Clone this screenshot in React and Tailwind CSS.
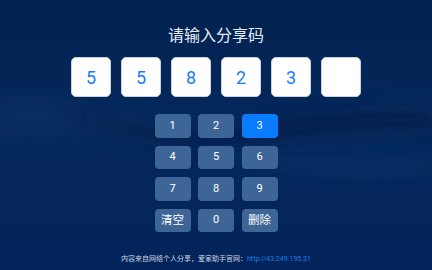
import React from "react";

const font = { fontFamily: "Roboto, 'Noto Sans CJK SC', sans-serif" };

export default function App() {
  const code = ["5", "5", "8", "2", "3", ""];
  const keys = ["1", "2", "3", "4", "5", "6", "7", "8", "9", "清空", "0", "删除"];
  return (
    <div
      className="relative w-[432px] h-[270px] overflow-hidden bg-[#03265a]"
      style={font}
    >
      <svg
        className="absolute inset-0"
        width="432"
        height="270"
        viewBox="0 0 432 270"
      >
        <defs>
          <linearGradient id="bg" x1="0" y1="0" x2="0" y2="1">
            <stop offset="0" stopColor="#022250" />
            <stop offset="0.45" stopColor="#05285b" />
            <stop offset="1" stopColor="#03245a" />
          </linearGradient>
          <filter id="blur" x="-20%" y="-50%" width="140%" height="200%">
            <feGaussianBlur stdDeviation="8" />
          </filter>
        </defs>
        <rect width="432" height="270" fill="url(#bg)" />
        <path
          d="M0 95 C60 90 120 110 180 120 C260 130 330 110 432 95 L432 135 C340 150 260 160 180 150 C110 140 50 130 0 140 Z"
          fill="#0b3669"
          opacity="0.4"
          filter="url(#blur)"
        />
        <path
          d="M60 110 C120 120 170 135 220 130 C280 120 330 108 432 112 L432 130 C340 128 290 140 230 145 C170 150 120 135 60 110 Z"
          fill="#011741"
          opacity="0.6"
          filter="url(#blur)"
        />
        <path
          d="M200 150 C280 155 350 160 432 150 L432 175 C340 185 270 175 200 150 Z"
          fill="#0c386d"
          opacity="0.35"
          filter="url(#blur)"
        />
      </svg>

      <div className="relative flex flex-col items-center">
        <div className="mt-[26px] text-[16px] leading-[20px] text-[#e4ebf4]">
          请输入分享码
        </div>

        <div className="mt-[11px] flex gap-[10px]">
          {code.map((c, i) => (
            <div
              key={i}
              className="flex h-[40px] w-[40px] items-center justify-center rounded-[5px] border border-[#c9d2de] bg-white text-[18px] text-[#1a7bff]"
            >
              {c}
            </div>
          ))}
        </div>

        <div className="mt-[17px] grid grid-cols-[36px_36px_36px] gap-x-[7.5px] gap-y-[8px]">
          {keys.map((k) => (
            <div
              key={k}
              className={
                "flex h-[23.5px] items-center justify-center rounded-[4px] text-white " +
                (k.length > 1 ? "text-[11.5px] " : "text-[11px] ") +
                (k === "3" ? "bg-[#0a7cff]" : "bg-[#3d6696]")
              }
            >
              {k}
            </div>
          ))}
        </div>

        <div className="mt-[22px] text-[7px] leading-[10px] text-[#cdd6e2]">
          内容来自网络个人分享，爱家助手官网：
          <span className="text-[#1c7de6]">http://43.249.195.31</span>
        </div>
      </div>
    </div>
  );
}
